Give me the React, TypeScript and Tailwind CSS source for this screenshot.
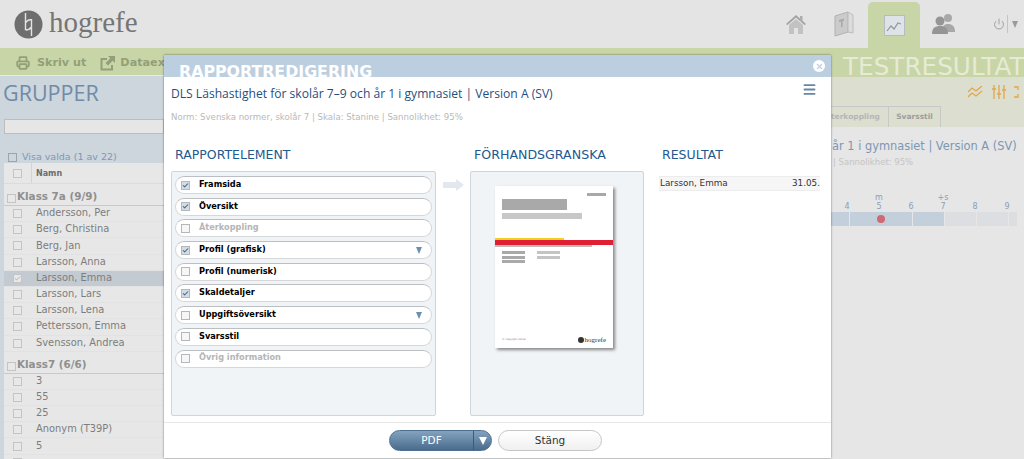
import { Power, Printer, Check, Menu, X } from "lucide-react";

const font = { fontFamily: '"DejaVu Sans", Verdana, sans-serif' };
const humanist = { fontFamily: '"Open Sans", sans-serif' };

const klass7a = ["Andersson, Per", "Berg, Christina", "Berg, Jan", "Larsson, Anna", "Larsson, Emma", "Larsson, Lars", "Larsson, Lena", "Pettersson, Emma", "Svensson, Andrea"];
const klass7 = ["3", "55", "25", "Anonym (T39P)", "5", ""];

const elements = [
  { name: "Framsida", checked: true },
  { name: "Översikt", checked: true },
  { name: "Återkoppling", disabled: true },
  { name: "Profil (grafisk)", checked: true, arrow: true },
  { name: "Profil (numerisk)" },
  { name: "Skaldetaljer", checked: true },
  { name: "Uppgiftsöversikt", arrow: true },
  { name: "Svarsstil" },
  { name: "Övrig information", disabled: true },
];

function SmallBox({ checked }: { checked?: boolean }) {
  return (
    <span className="w-[9px] h-[9px] border border-[#c4c4c4] bg-[#e8e8e8] flex items-center justify-center shrink-0">
      {checked && <Check size={9} strokeWidth={2} className="text-[#8a8f94]" />}
    </span>
  );
}

function PersonRow({ name, selected }: { name: string; selected?: boolean }) {
  return (
    <div className={`h-[16.2px] flex items-center pl-[9px] text-[9.900px] text-[#7d7d7d] border-b border-[#e2e2e2] ${selected ? "bg-[#c3cad1]" : "bg-[#e7e7e7]"}`}>
      <SmallBox checked={selected} />
      <span className="ml-[14px] whitespace-nowrap">{name}</span>
    </div>
  );
}

function GroupRow({ name }: { name: string }) {
  return (
    <div className="h-[22px] flex items-end pb-[2px] pl-[3px] gap-[1px] text-[10.400px] font-bold text-[#8f8f8f] border-b border-[#c9c9c9] bg-[#e7e7e7]">
      <SmallBox />
      <span className="leading-[13px]">{name}</span>
    </div>
  );
}

function NavIcon({ kind }: { kind: "home" | "book" | "chart" | "users" }) {
  if (kind === "home") {
    return (
      <svg width="22" height="22" viewBox="0 0 22 22">
        <path d="M1 11 11 2l10 9-1.500 1L11 4.500 2.500 12z" fill="#a2a2a2" />
        <path d="M4 12 11 6l7 6v9h-5v-6H9v6H4z" fill="#c2c2c2" />
        <rect x="15" y="3" width="2.500" height="5" fill="#adadad" />
      </svg>
    );
  }
  if (kind === "book") {
    return (
      <svg width="20" height="26" viewBox="0 0 20 26">
        <path d="M1 5 14 1v20L1 25z" fill="#cbcbcb" stroke="#b2b2b2" />
        <path d="M14 1l5 3v18l-5-1z" fill="#dcdcdc" stroke="#bcbcbc" />
        <path d="M5 9l5-1.500v2L8.500 10v6H7v-5.500L5 11z" fill="#a8a8a8" />
      </svg>
    );
  }
  if (kind === "chart") {
    return (
      <svg width="21" height="21" viewBox="0 0 21 21">
        <rect x="0.500" y="0.500" width="20" height="20" fill="#dde3e6" stroke="#b5bcc2" />
        <path d="M3 16l4-5 3 3 4-6 3 1" fill="none" stroke="#8f989f" strokeWidth="1.200" />
      </svg>
    );
  }
  return (
    <svg width="24" height="22" viewBox="0 0 24 22">
      <circle cx="16" cy="5" r="4" fill="#a8a8a8" />
      <path d="M10 19c0-6 2-8 6-8s7 2 7 8z" fill="#a8a8a8" />
      <circle cx="8" cy="8" r="4.500" fill="#959595" />
      <path d="M0 21c0-6 3-8 8-8s8 2 8 8z" fill="#959595" />
    </svg>
  );
}

function Logo() {
  return (
    <svg width="29" height="29" viewBox="0 0 29 29">
      <circle cx="14.500" cy="14.500" r="14" fill="#6e6e6e" />
      <path d="M11.500 3v17M17.500 9v17M11.500 13q2.500-4 6-3M11.500 20q4 0 6-3" fill="none" stroke="#e4e4e4" strokeWidth="1.400" />
    </svg>
  );
}

function ExportIcon() {
  return (
    <svg width="15" height="15" viewBox="0 0 15 15" className="ml-[14px]">
      <path d="M7 3H1.500v10.500H12V9" fill="none" stroke="currentColor" strokeWidth="2" />
      <path d="M8 0h7v7l-2.300-2.300L8 9.400 5.600 7l4.700-4.700z" fill="currentColor" />
    </svg>
  );
}

function ElementRow({ name, checked, disabled, arrow }: { name: string; checked?: boolean; disabled?: boolean; arrow?: boolean }) {
  return (
    <div className="h-[18px] mb-[3.700px] rounded-[9px] bg-white border border-[#d5d7d9] border-t-[#bcbfc2] flex items-center pl-[5px] pr-[9px]">
      <span className={`w-[9px] h-[9px] border border-[#b4b8bc] flex items-center justify-center shrink-0 ${checked ? "bg-[#d3dbe3]" : "bg-[#f6f6f6]"}`}>
        {checked && <Check size={9} strokeWidth={3.500} className="text-[#44668a]" />}
      </span>
      <span className={`ml-[9px] -mt-[2px] text-[8.200px] font-bold whitespace-nowrap ${disabled ? "text-[#b5b5b5]" : "text-black"}`}>{name}</span>
      {arrow && <span className="ml-auto w-0 h-0 border-l-[3.500px] border-r-[3.500px] border-t-[7px] border-l-transparent border-r-transparent border-t-[#6d8fb0]" />}
    </div>
  );
}

function ReportPreview() {
  return (
    <div className="w-[118px] h-[162px] bg-white shadow-[2px_2px_3px_rgba(0,0,0,0.45)] flex flex-col">
      <div className="self-end w-[19px] h-[3px] bg-[#a8a8a8] mt-[7px] mr-[7px]" />
      <div className="w-[65px] h-[11px] bg-[#a9a9a9] ml-[7px] mt-[3px]" />
      <div className="w-[80px] h-[6px] bg-[#c8c8c8] ml-[7px] mt-[3px]" />
      <div className="w-[69px] h-[2px] bg-[#eed21f] mt-[19px]" />
      <div className="w-full h-[5px] bg-[#e01f35]" />
      <div className="w-[97px] h-[2px] bg-[#bdbdbd]" />
      <div className="flex gap-[12px] ml-[7px] mt-[4px]">
        <div className="flex flex-col gap-[1.500px]">
          <div className="w-[23px] h-[3px] bg-[#a9a9a9]" />
          <div className="w-[23px] h-[3px] bg-[#a9a9a9]" />
          <div className="w-[23px] h-[3px] bg-[#a9a9a9]" />
        </div>
        <div className="flex flex-col gap-[1.500px]">
          <div className="w-[23px] h-[3px] bg-[#c4c4c4]" />
          <div className="w-[23px] h-[3px] bg-[#c4c4c4]" />
        </div>
      </div>
      <div className="mt-auto mb-[4px] mx-[7px] flex items-center justify-between">
        <span className="text-[2.500px] text-[#777]">© copyright notice</span>
        <div className="flex items-center gap-[1px]">
          <span className="w-[6px] h-[6px] rounded-full bg-[#333]" />
          <span className="text-[7px] leading-[8px] text-[#333]" style={{ fontFamily: '"Liberation Serif", serif' }}>hogrefe</span>
        </div>
      </div>
    </div>
  );
}

export default function App() {
  return (
    <div className="relative w-[1024px] h-[459px] overflow-hidden bg-[#e6e6e6]" style={font}>
      {/* Bakgrundssida */}
      <div className="h-[48px] bg-[#e4e4e4] flex items-center pl-[14px]">
        <Logo />
        <span className="ml-[6px] text-[29px] leading-[30px] text-[#757575] -mt-[4px]" style={{ fontFamily: '"Liberation Serif", serif' }}>hogrefe</span>
        <div className="ml-auto flex items-stretch h-full">
          <div className="w-[54px] pl-[10px] flex items-center justify-center"><NavIcon kind="home" /></div>
          <div className="w-[44px] pl-[8px] flex items-center justify-center"><NavIcon kind="book" /></div>
          <div className="ml-[6px] mt-[2px] w-[52px] rounded-t-[5px] bg-[#c8d5a6] flex items-center justify-center"><NavIcon kind="chart" /></div>
          <div className="w-[48px] flex items-center justify-center"><NavIcon kind="users" /></div>
          <div className="w-[56px] flex items-center justify-end pr-[6px] gap-[2px] text-[#a0a0a0]">
            <Power size={12} strokeWidth={2} />
            <span className="w-px h-[18px] bg-[#c4c4c4]" />
            <span className="ml-[2px] w-0 h-0 border-l-[3.500px] border-r-[3.500px] border-t-[7px] border-l-transparent border-r-transparent border-t-[#9a9a9a]" />
          </div>
        </div>
      </div>
      <div className="h-[27px] bg-[#c8d5a6] flex items-center pt-[3px] pl-[16px] text-[11.200px] font-bold text-[#939f78]">
        <Printer size={14} strokeWidth={3} />
        <span className="ml-[7px]">Skriv ut</span>
        <ExportIcon />
        <span className="ml-[5px]">Dataexport</span>
      </div>
      <div className="flex h-[384px]">
        <div className="w-[164px] shrink-0 bg-[#cdd5dd] border-t border-[#e8e8e8] overflow-hidden">
          <div className="pl-[3px] pt-[3px] text-[21.500px] leading-[28px] text-[#6f8ba8]" style={humanist}>GRUPPER</div>
          <div className="ml-[4px] mt-[12px] h-[15px] bg-[#e6e6e6] border border-[#bdbdbd]" />
          <div className="h-[29px] pl-[8px] pt-[17px] flex items-center gap-[5px] text-[9.500px] text-[#7a9ab8]">
            <span className="w-[9px] h-[9px] border border-[#9ba3ab]" />
            Visa valda (1 av 22)
          </div>
          <div className="ml-[4px] bg-[#e7e7e7]">
            <div className="h-[21px] flex items-center pl-[9px] border-b border-[#dcdcdc]">
              <SmallBox />
              <span className="ml-[9px] h-full border-l border-[#d4d4d4] pl-[4px] text-[8px] font-bold text-[#6d6d6d] leading-[21px]">Namn</span>
            </div>
            <GroupRow name="Klass 7a (9/9)" />
            {klass7a.map(n => <PersonRow key={n} name={n} selected={n === "Larsson, Emma"} />)}
            <GroupRow name="Klass7 (6/6)" />
            {klass7.map((n, i) => <PersonRow key={i} name={n} />)}
          </div>
        </div>
        <div className="flex-1 relative" />
        <div className="w-[193px] shrink-0 bg-[#e6e6e6] -mt-[27px] flex flex-col overflow-hidden">
          <div className="h-[29px] bg-[#c8d5a6] pl-[12px] pt-[6px] text-[24.700px] leading-[26px] text-[#e6ebd6] whitespace-nowrap">TESTRESULTAT</div>
          <div className="h-[50px] bg-[#dcdfd0] flex flex-col">
            <div className="h-[30px] flex justify-end items-center gap-[8px] text-[#e3a64a]">
              <svg width="16" height="12" viewBox="0 0 16 12" fill="none" stroke="currentColor" strokeWidth="1.300"><path d="M0 6l4-4 4 3 6-5M0 11l4-4 4 3 6-5" /></svg>
              <svg width="14" height="14" viewBox="0 0 14 14" fill="none" stroke="currentColor" strokeWidth="1.300"><path d="M2 0v14M7 0v14M12 0v14M0 4h4M5 9h4M10 5h4" /></svg>
              <svg width="10" height="14" viewBox="0 0 10 14" fill="none" stroke="currentColor" strokeWidth="1.300"><path d="M0 2h4v3M0 12h4V9" /></svg>
            </div>
            <div className="flex items-end mt-auto">
              <div className="w-[58px] h-[21px] border-t border-r border-[#c8c8c8] text-[7.500px] leading-[20px] font-bold text-[#b5b5b5] overflow-hidden whitespace-nowrap">terkoppling</div>
              <div className="h-[21px] w-[52px] text-center border border-b-0 border-l-0 border-[#c8c8c8] text-[7.500px] leading-[20px] font-bold text-[#9c9c9c]">Svarsstil</div>
            </div>
          </div>
          <div className="pt-[12px] pl-[1px] text-[11.400px] leading-[14px] text-[#7c97b4] whitespace-nowrap">år 1 i gymnasiet | Version A (SV)</div>
          <div className="pl-[2px] pt-[3px] text-[8.500px] text-[#c4c4c4] whitespace-nowrap">| Sannolikhet: 95%</div>
          <div className="mt-[24px] grid grid-cols-6 w-[192px] text-center text-[8px] leading-[9px] text-[#8aa0b8]">
            {[["", "4"], ["m", "5"], ["", "6"], ["+s", "7"], ["", "8"], ["", "9"]].map(([top, n]) => (
              <div key={n} className="flex flex-col items-center"><span className="h-[9px]">{top}</span><span>{n}</span></div>
            ))}
          </div>
          <div className="mt-[1px] flex h-[14px] w-[186px] gap-px">
            <div className="w-[18px] bg-[#c3cfdb]" />
            <div className="w-[62px] bg-[#c3cfdb] flex items-center pl-[27px]">
              <span className="w-[8px] h-[8px] rounded-full bg-[#cf6a74]" />
            </div>
            <div className="w-[31px] bg-[#c3cfdb]" />
            <div className="w-[31px] bg-[#dcdee1]" />
            <div className="w-[31px] bg-[#dcdee1]" />
            <div className="w-[8px] bg-[#dcdee1]" />
          </div>
        </div>
      </div>

      {/* Modal */}
      <div className="absolute left-[164px] top-[55px] w-[667px] h-[403px] flex flex-col bg-white shadow-[0_0_2px_rgba(0,0,0,0.5)]">
        <div className="h-[22px] bg-[#bccfe0] relative overflow-hidden shrink-0">
          <span className="absolute left-[15px] top-[8px] text-[15.800px] leading-[18px] font-bold text-white whitespace-nowrap">RAPPORTREDIGERING</span>
          <span className="absolute right-[6px] top-[5px] w-[12px] h-[12px] rounded-full bg-white flex items-center justify-center">
            <X size={9} strokeWidth={3} className="text-[#bccfe0]" />
          </span>
        </div>
        <div className="relative px-[7px] pt-[8px] shrink-0">
          <div className="text-[12.100px] leading-[18px] text-[#1f4f80] whitespace-nowrap" style={humanist}>DLS Läshastighet för skolår 7–9 och år 1 i gymnasiet | Version A (SV)</div>
          <div className="mt-[8px] text-[8.600px] leading-[12px] text-[#b9b9b9] whitespace-nowrap">Norm: Svenska normer, skolår 7 | Skala: Stanine | Sannolikhet: 95%</div>
          <Menu size={15} strokeWidth={3} className="absolute right-[14px] top-[5px] text-[#6486a8]" />
        </div>
        <div className="flex flex-1 min-h-0 pt-[23px] pl-[7px]">
          <div className="w-[265px] shrink-0">
            <div className="pl-[4px] h-[19px] text-[12.500px] leading-[18px] text-[#21598f]">RAPPORTELEMENT</div>
            <div className="mt-[6px] h-[245px] bg-[#f1f4f7] border border-[#cfd5da] rounded-[2px] pt-[4px] px-[3px]">
              {elements.map(e => <ElementRow key={e.name} {...e} />)}
            </div>
          </div>
          <div className="w-[34px] shrink-0 pt-[33px] pl-[7px]">
            <div className="flex items-center">
              <span className="w-[13px] h-[6px] bg-[#e2e8ee]" />
              <span className="w-0 h-0 border-y-[6px] border-l-[8px] border-y-transparent border-l-[#e2e8ee]" />
            </div>
          </div>
          <div className="w-[174px] shrink-0">
            <div className="pl-[4px] h-[19px] text-[12.600px] leading-[18px] text-[#21598f] whitespace-nowrap">FÖRHANDSGRANSKA</div>
            <div className="mt-[6px] h-[245px] bg-[#f1f4f7] border border-[#cfd5da] rounded-[2px] pl-[24px] pt-[14px]">
              <ReportPreview />
            </div>
          </div>
          <div className="ml-[15px] w-[161px] shrink-0">
            <div className="pl-[3px] h-[19px] text-[12.500px] leading-[18px] text-[#21598f]">RESULTAT</div>
            <div className="mt-[6px] pt-[5px]">
              <div className="h-[15px] bg-[#f6f6f6] border-y border-[#ececec] flex items-center justify-between pl-[1px] text-[8.800px] text-[#333]">
                <span>Larsson, Emma</span>
                <span>31.05.</span>
              </div>
            </div>
          </div>
        </div>
        <div className="h-[36px] shrink-0 border-t border-[#e6e6e6] flex items-center pl-[225px] gap-[6px]">
          <div className="w-[103px] h-[21px] rounded-[10.500px] bg-gradient-to-b from-[#83a3c0] to-[#4a6c8c] border border-[#4f6f8e] flex items-center text-white text-[10.500px]">
            <span className="flex-1 text-center">PDF</span>
            <span className="w-[18px] h-full border-l border-[#3e5c79] flex items-center justify-center">
              <span className="w-0 h-0 border-x-[4px] border-t-[8px] border-x-transparent border-t-white" />
            </span>
          </div>
          <div className="w-[104px] h-[21px] rounded-[10.500px] bg-gradient-to-b from-white to-[#f0f0f0] border border-[#c6c6c6] flex items-center justify-center text-[10.500px] text-[#333]">Stäng</div>
        </div>
      </div>
    </div>
  );
}
